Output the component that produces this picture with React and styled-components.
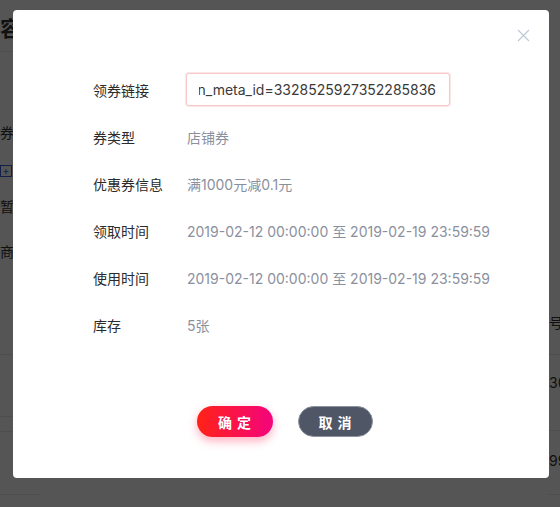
import React, { useEffect, useRef } from "react";
import styled, { createGlobalStyle } from "styled-components";

const GlobalStyle = createGlobalStyle`
  html, body {
    margin: 0;
    padding: 0;
    background: #fff;
    font-family: "Inter", "Noto Sans CJK SC", sans-serif;
  }
`;

const Screen = styled.div`
  position: relative;
  width: 100vw;
  height: 100vh;
  overflow: hidden;
  background: #fff;
`;

// the page sitting under the mask, mostly hidden by the modal
const Page = styled.div`
  display: flex;
  justify-content: space-between;
  height: 100%;
  color: #333;
  font-size: 14px;
  line-height: 17px;
`;

const PageLeft = styled.div`
  display: flex;
  flex-direction: column;
  width: 40px;
`;

const PageTitle = styled.div`
  font-size: 21px;
  line-height: 25px;
  font-weight: 700;
  padding: 16px 0 10px;
  border-bottom: 1px solid #e8e8e8;
  white-space: nowrap;
`;

const PageText = styled.div`
  margin-top: ${(p) => p.top}px;
  white-space: nowrap;
`;

const PlusBox = styled.div`
  margin-top: 24px;
  width: 10px;
  height: 10px;
  border: 1px solid #3a5fd8;
  color: #3a5fd8;
  font-size: 11px;
  line-height: 10px;
  text-align: center;
`;

const Line = styled.div`
  margin-top: ${(p) => p.top}px;
  border-top: 1px solid #e8e8e8;
`;

const PageRight = styled.div`
  display: flex;
  flex-direction: column;
  width: 11px;
  padding-top: 314px;
`;

const Mask = styled.div`
  position: absolute;
  inset: 0;
  background: rgba(0, 0, 0, 0.665);
  padding: 10px 0 0 13px;
`;

const Modal = styled.div`
  position: relative;
  width: 536px;
  height: 468px;
  box-sizing: border-box;
  background: #fff;
  border-radius: 4px;
  padding: 63px 0 0 80px;
  display: flex;
  flex-direction: column;
`;

const Close = styled.button`
  position: absolute;
  top: 19px;
  right: 19px;
  width: 13px;
  height: 13px;
  padding: 0;
  border: none;
  background: none;
  display: flex;
`;

const Rows = styled.div`
  display: flex;
  flex-direction: column;
  gap: 14px;
`;

const Row = styled.div`
  display: grid;
  grid-template-columns: 94px 1fr;
  align-items: center;
  height: 33px;
  font-size: 14px;
`;

const Label = styled.div`
  color: #2b2b2b;
`;

const Value = styled.div`
  color: #8b909e;
  white-space: nowrap;
`;

const LinkInput = styled.input`
  width: 264px;
  height: 33px;
  box-sizing: border-box;
  border: 1px solid #f7c9cd;
  box-shadow: 0 0 0 1px #fde4e6;
  border-radius: 3px;
  padding: 0 13px 0 12px;
  margin-left: -1px;
  font-family: inherit;
  font-size: 14px;
  color: #3a3a3a;
  outline: none;
`;

const Actions = styled.div`
  display: flex;
  justify-content: center;
  gap: 25px;
  margin-top: 65px;
  padding-right: 73px;
`;

const Button = styled.button`
  width: ${(p) => (p.primary ? 76 : 75)}px;
  height: 31px;
  border-radius: 16px;
  border: ${(p) => (p.primary ? "none" : "1px solid #8e939d")};
  background: ${(p) =>
    p.primary ? "linear-gradient(90deg, #ff2216, #f4047d)" : "#4f5665"};
  box-shadow: ${(p) =>
    p.primary ? "0 4px 10px rgba(255, 40, 90, 0.38)" : "none"};
  color: #fff;
  font-family: inherit;
  font-size: 14px;
  font-weight: 700;
  letter-spacing: 5px;
  text-indent: 5px;
  cursor: pointer;
`;

const rows = [
  ["券类型", "店铺券"],
  ["优惠券信息", "满1000元减0.1元"],
  ["领取时间", "2019-02-12 00:00:00 至 2019-02-19 23:59:59"],
  ["使用时间", "2019-02-12 00:00:00 至 2019-02-19 23:59:59"],
  ["库存", "5张"],
];

const App = () => {
  const inputRef = useRef(null);

  useEffect(() => {
    const el = inputRef.current;
    if (el) el.scrollLeft = el.scrollWidth;
  }, []);

  return (
    <Screen>
      <GlobalStyle />
      <Page>
        <PageLeft>
          <PageTitle>容</PageTitle>
          <PageText top={72}>券</PageText>
          <PlusBox>+</PlusBox>
          <PageText top={21}>暂</PageText>
          <PageText top={28}>商</PageText>
          <Line top={94} />
          <Line top={61} />
          <Line top={14} />
          <Line top={62} />
        </PageLeft>
        <PageRight>
          <div>号</div>
          <Line top={23} />
          <PageText top={19}>30</PageText>
          <Line top={39} />
          <PageText top={21}>99</PageText>
          <Line top={25} />
        </PageRight>
      </Page>
      <Mask>
        <Modal>
          <Close aria-label="关闭">
            <svg width="13" height="13" viewBox="0 0 13 13">
              <path
                d="M1 1L12 12M12 1L1 12"
                stroke="#bcc8d8"
                strokeWidth="1.1"
                fill="none"
              />
            </svg>
          </Close>
          <Rows>
            <Row>
              <Label>领券链接</Label>
              <div>
                <LinkInput
                  ref={inputRef}
                  readOnly
                  value="https://shop.m.jd.com/coupon?coupon_meta_id=3328525927352285836"
                />
              </div>
            </Row>
            {rows.map(([label, value]) => (
              <Row key={label}>
                <Label>{label}</Label>
                <Value>{value}</Value>
              </Row>
            ))}
          </Rows>
          <Actions>
            <Button primary>确定</Button>
            <Button>取消</Button>
          </Actions>
        </Modal>
      </Mask>
    </Screen>
  );
};

export default App;
